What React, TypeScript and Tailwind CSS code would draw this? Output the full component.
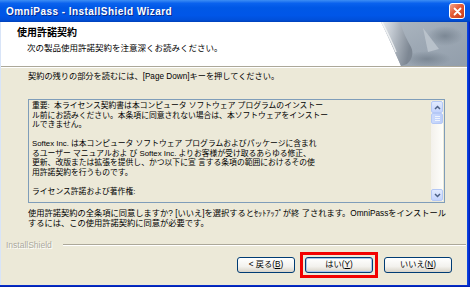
import React from "react";

const jp = "font-['Liberation_Sans','Noto_Sans_CJK_JP',sans-serif]";

const licenseText = [
    "重要:  本ライセンス契約書は本コンピュータ ソフトウェア プログラムのインストー",
    "ル前にお読みください。本条項に同意されない場合は、本ソフトウェアをインストー",
    "ルできません。",
    "",
    "Softex Inc. は本コンピュータ ソフトウェア プログラムおよびパッケージに含まれ",
    "るユーザー マニュアルおよ び Softex Inc. よりお客様が受け取るあらゆる修正、",
    "更新、改版または拡張を提供し、かつ以下に宣 言する条項の範囲におけるその使",
    "用許諾契約を行うものです。",
    "",
    "ライセンス許諾および著作権:",
].join("\n");

/** XP style red close box */
function CloseButton() {
    return (
        <div className="w-[16px] h-[16px] rounded-[3px] border border-white bg-[linear-gradient(135deg,#F4A58C,#E45A34_45%,#C43A1A)] flex items-center justify-center">
            <svg width="9" height="9" viewBox="0 0 9 9">
                <path d="M1.5 1.5 L7.5 7.5 M7.5 1.5 L1.5 7.5" stroke="white" strokeWidth="1.8" strokeLinecap="round" />
            </svg>
        </div>
    );
}

/** The grey page-curl artwork on the right of the header */
function HeaderArt() {
    return (
        <svg width="86" height="44" viewBox="0 0 86 44" className="shrink-0">
            <defs>
                <linearGradient id="bgGrad" x1="0" y1="0" x2="1" y2="1">
                    <stop offset="0" stopColor="#AEB8C2" />
                    <stop offset="0.5" stopColor="#9DA8B4" />
                    <stop offset="1" stopColor="#929EAB" />
                </linearGradient>
                <linearGradient id="curlGrad" x1="0" y1="0" x2="1" y2="0.3">
                    <stop offset="0" stopColor="#E9EBEE" />
                    <stop offset="0.4" stopColor="#BFC6CE" />
                    <stop offset="1" stopColor="#7D8793" />
                </linearGradient>
                <radialGradient id="blob" cx="0.5" cy="0.5" r="0.5">
                    <stop offset="0" stopColor="#76828F" stopOpacity="0.85" />
                    <stop offset="1" stopColor="#76828F" stopOpacity="0" />
                </radialGradient>
            </defs>
            <rect width="86" height="44" fill="white" />
            <path d="M0 0 L86 0 L86 44 L20 44 C14 30 6 12 0 0 Z" fill="url(#bgGrad)" />
            <ellipse cx="64" cy="14" rx="18" ry="10" fill="url(#blob)" />
            <ellipse cx="46" cy="37" rx="24" ry="8" fill="url(#blob)" />
            <path d="M42 6 L58 27 L47 30 Z" fill="#C2C9D1" opacity="0.75" />
            <path d="M0 0 L19 0 C22 10 26 18 30 25 C33 31 31 38 26 42 L20 44 C14 30 6 12 0 0 Z" fill="url(#curlGrad)" />
            <path d="M1 0 C6 10 11 20 15 30" stroke="#F6F7F8" strokeWidth="1.5" fill="none" opacity="0.8" />
        </svg>
    );
}

function Chevron({ up }: { up: boolean }) {
    return (
        <svg width="7" height="5" viewBox="0 0 7 5">
            <path d={up ? "M1 4 L3.5 1.5 L6 4" : "M1 1 L3.5 3.5 L6 1"} stroke="#4D6185" strokeWidth="1.5" fill="none" />
        </svg>
    );
}

function ScrollBar() {
    const btn =
        "h-[12px] rounded-[2px] border border-[#B4C8F6] bg-[linear-gradient(to_bottom,#E1EAFE,#C3D3FD)] flex items-center justify-center";
    return (
        <div className="w-[12px] my-[1px] mr-[1px] flex flex-col bg-[linear-gradient(to_right,#F3F1EC,#FEFEFB)]">
            <div className={btn}>
                <Chevron up />
            </div>
            <div className="h-[11px] rounded-[2px] border border-[#B4C8F6] bg-[linear-gradient(to_right,#CBDAFC,#BCCEFA)] flex flex-col items-center justify-center gap-[1px]">
                <div className="w-[5px] h-px bg-[#EEF4FE]" />
                <div className="w-[5px] h-px bg-[#EEF4FE]" />
                <div className="w-[5px] h-px bg-[#EEF4FE]" />
            </div>
            <div className="flex-1" />
            <div className={btn}>
                <Chevron up={false} />
            </div>
        </div>
    );
}

type XpButtonProps = {
    width: string;
    focused?: boolean;
    children: React.ReactNode;
};

function XpButton({ width, focused, children }: XpButtonProps) {
    return (
        <div className={`relative ${width}`}>
            <div
                className={`h-[16px] rounded-[3px] border border-[#003C74] bg-[linear-gradient(to_bottom,#FFFFFF,#F3F2EE_60%,#D8D3C8)] flex items-center justify-center text-[8.2px] leading-none text-black ${jp} ${
                    focused ? "shadow-[inset_0_0_0_1px_#A9C4EF]" : ""
                }`}
            >
                {children}
            </div>
            {/* red highlight annotation */}
            {focused && <div className="absolute -left-[5px] -right-[5px] -top-[5px] -bottom-[5px] border-[3px] border-[#F20000]" />}
        </div>
    );
}

export default function App() {
    return (
        <div className={`w-[470px] h-[287px] flex flex-col bg-[#ECE9D8] overflow-hidden ${jp}`}>
            {/* Title bar */}
            <div className="h-[22px] shrink-0 flex items-center justify-between pl-[6px] pr-[5px] bg-[linear-gradient(to_bottom,#3D8EF4,#0A62EE_15%,#0058E6_35%,#0056E8_70%,#0050DA_90%,#0040B8)]">
                <span className="font-['Liberation_Sans',sans-serif] font-bold text-[10px] tracking-[0.45px] text-white [text-shadow:1px_1px_0_#0A2A8C]">
                    OmniPass - InstallShield Wizard
                </span>
                <CloseButton />
            </div>

            <div className="flex-1 flex min-h-0">
                <div className="flex-1 flex flex-col border-l border-[#D8E4F8]">
                    {/* Header */}
                    <div className="h-[44px] shrink-0 bg-white flex justify-between">
                        <div className="pl-[16px] pt-[5px]">
                            <div className="text-[10px] leading-[11px] font-bold text-black">使用許諾契約</div>
                            <div className="pl-[10px] mt-[5px] text-[8.5px] leading-[10px] text-black">
                                次の製品使用許諾契約を注意深くお読みください。
                            </div>
                        </div>
                        <HeaderArt />
                    </div>
                    <div className="h-px bg-[#ACA899]" />
                    <div className="h-px bg-white" />

                    {/* Body */}
                    <div className="flex-1 flex flex-col pt-[4px]">
                        <div className="pl-[27px] text-[8.2px] leading-[10px] text-black whitespace-nowrap">
                            契約の残りの部分を読むには、[Page Down]キーを押してください。
                        </div>

                        <div className="ml-[27px] mt-[17px] w-[417px] h-[104px] border border-[#7F9DB9] flex">
                            <div className="flex-1 pl-[3px] pt-[1px] text-[7.8px] leading-[9.5px] text-black whitespace-pre overflow-hidden">
                                {licenseText}
                            </div>
                            <ScrollBar />
                        </div>

                        <div className="pl-[27px] mt-[6px] text-[8.25px] leading-[9.5px] text-black whitespace-pre">
                            {"使用許諾契約の全条項に同意しますか? [いいえ]を選択するとｾｯﾄｱｯﾌﾟが終 了されます。OmniPassをインストール\nするには、この使用許諾契約に同意が必要です。"}
                        </div>

                        {/* InstallShield divider */}
                        <div className="mt-[12px] pl-[5px] pr-[1px] flex items-center">
                            <span className="font-['Liberation_Sans',sans-serif] text-[8.5px] leading-[10px] text-[#ACAA9E] [text-shadow:1px_1px_0_#FFFFFF]">
                                InstallShield
                            </span>
                            <div className="flex-1 ml-[11px] flex flex-col">
                                <div className="h-px bg-[#ACA899]" />
                                <div className="h-px bg-white" />
                            </div>
                        </div>

                        {/* Buttons */}
                        <div className="mt-[7px] pr-[15px] flex justify-end gap-[10px]">
                            <XpButton width="w-[58px]">
                                {"< 戻る("}
                                <span className="underline">B</span>)
                            </XpButton>
                            <XpButton width="w-[68px]" focused>
                                はい(<span className="underline">Y</span>)
                            </XpButton>
                            <div className="ml-px">
                                <XpButton width="w-[68px]">
                                    いいえ(<span className="underline">N</span>)
                                </XpButton>
                            </div>
                        </div>
                    </div>
                </div>
                {/* right window frame */}
                <div className="w-[3px] bg-[linear-gradient(to_right,#0B4EE0,#0831D9,#001EA0)]" />
            </div>
            {/* bottom window frame */}
            <div className="h-[2px] shrink-0 bg-[linear-gradient(to_bottom,#0831D9,#001EA0)]" />
        </div>
    );
}
